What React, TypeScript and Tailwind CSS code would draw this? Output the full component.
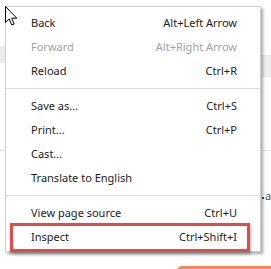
import React from 'react';

type Item = { label: string; shortcut?: string; disabled?: boolean; sep?: boolean };

const items: Item[] = [
    { label: 'Back', shortcut: 'Alt+Left Arrow' },
    { label: 'Forward', shortcut: 'Alt+Right Arrow', disabled: true },
    { label: 'Reload', shortcut: 'Ctrl+R' },
    { label: '', sep: true },
    { label: 'Save as...', shortcut: 'Ctrl+S' },
    { label: 'Print...', shortcut: 'Ctrl+P' },
    { label: 'Cast...' },
    { label: 'Translate to English' },
    { label: '', sep: true },
    { label: 'View page source', shortcut: 'Ctrl+U' },
    { label: 'Inspect', shortcut: 'Ctrl+Shift+I' },
];

function Cursor() {
    return (
        <svg width="14" height="22" viewBox="0 0 14 22" className="absolute left-[5px] top-[6px] z-20">
            <path
                d="M0.5 0.5 L0.5 16.5 L4.2 13 L6.8 19 L9.2 18 L6.7 12.2 L11.8 12.2 Z"
                fill="#ffffff"
                stroke="#000000"
                strokeWidth="1"
                strokeLinejoin="miter"
            />
        </svg>
    );
}

function App() {
    return (
        <div className="relative w-[271px] h-[269px] bg-white overflow-hidden font-['Noto_Sans','Liberation_Sans',sans-serif]">
            {/* page content peeking out behind the menu */}
            <div className="absolute left-0 top-[46px] w-[6px] h-[17px] bg-[#ececec]" />
            <div className="absolute right-0 top-[55px] w-[9px] h-[22px] bg-[#eeeef0]" />
            <div className="absolute left-0 top-[150px] w-[6px] h-px bg-[#e2e2e2]" />
            <div className="absolute right-0 top-[150px] w-[9px] h-px bg-[#e2e2e2]" />
            <div className="absolute left-[262px] top-[197px] w-[2px] h-[2px] bg-[#2b4a8a]" />
            <div className="absolute left-[265px] top-[190px] text-[11px] leading-none text-[#555]">a</div>
            <div className="absolute left-[177px] top-[266px] w-[100px] h-[10px] rounded-[5px] bg-[#f0875c]" />

            <Cursor />

            {/* context menu */}
            <div className="absolute left-[5px] top-[6px] w-[256px] border border-[#cfcfcf] bg-white pt-1 pb-[2px] shadow-[2px_2px_3px_rgba(0,0,0,0.35)] z-10">
                {items.map((it, i) =>
                    it.sep ? (
                        <div key={i} className="h-[11px] flex items-center">
                            <div className="w-full h-px bg-[#dcdcdc]" />
                        </div>
                    ) : (
                        <div
                            key={i}
                            className={`h-6 flex items-center justify-between pl-[25px] pr-[23px] text-[11px] ${it.disabled ? 'text-[#a3a3a3]' : 'text-[#1c1c1c]'}`}
                        >
                            <span>{it.label}</span>
                            {it.shortcut && <span>{it.shortcut}</span>}
                        </div>
                    )
                )}
            </div>

            {/* highlight round "Inspect" */}
            <div className="absolute left-[10px] top-[223px] w-[240px] h-[29px] border-[3px] border-[#e04a48] shadow-[1px_2px_3px_rgba(0,0,0,0.3)] z-10" />
        </div>
    );
}

export default App;
